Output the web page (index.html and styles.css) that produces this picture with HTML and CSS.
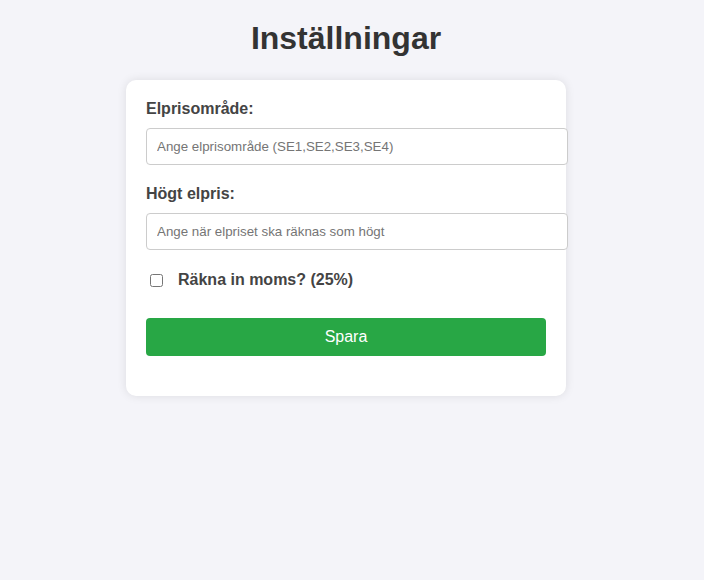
FILE: index.html
```html
<!DOCTYPE html>
<html lang="sv">
<head>
<meta charset="utf-8">
<title>Inställningar</title>
<link rel="stylesheet" href="styles.css">
</head>
<body>
<div class="page">
  <h1 class="title">Inställningar</h1>
  <form class="card">
    <label class="field-label" for="area">Elprisområde:</label>
    <input class="text-input" id="area" type="text" placeholder="Ange elprisområde (SE1,SE2,SE3,SE4)">
    <label class="field-label" for="high">Högt elpris:</label>
    <input class="text-input" id="high" type="text" placeholder="Ange när elpriset ska räknas som högt">
    <div class="check-row">
      <input class="check" id="vat" type="checkbox">
      <label class="check-label" for="vat">Räkna in moms? (25%)</label>
    </div>
    <button class="save" type="button">Spara</button>
  </form>
</div>
</body>
</html>
```
FILE: styles.css
```css
html, body {
  margin: 0;
  padding: 0;
  background: #f4f4f9;
  font-family: "Liberation Sans", Arial, sans-serif;
}
.page {
  display: flex;
  flex-direction: column;
  align-items: center;
  padding: 20px 12px 20px 0;
}
.title {
  margin: 0 0 23px;
  font-size: 32px;
  line-height: 37px;
  font-weight: bold;
  color: #333;
}
.card {
  width: 400px;
  padding: 20px 20px 40px;
  background: #fff;
  border-radius: 10px;
  box-shadow: 0 0 10px rgba(0, 0, 0, 0.1);
  display: flex;
  flex-direction: column;
  align-items: flex-start;
}
.field-label {
  display: block;
  font-size: 16px;
  line-height: 18px;
  font-weight: bold;
  color: #444;
  margin-bottom: 10px;
}
.text-input {
  box-sizing: content-box;
  width: 400px;
  margin: 0 0 20px;
  padding: 10px;
  font-family: "Liberation Sans", Arial, sans-serif;
  font-size: 13.333px;
  line-height: 15px;
  border: 1px solid #ccc;
  border-radius: 4px;
  color: #333;
  outline: none;
}
.text-input::placeholder {
  color: #757575;
}
.check-row {
  display: flex;
  align-items: center;
  height: 20px;
  margin-bottom: 28px;
}
.check {
  width: 13px;
  height: 13px;
  margin: 0 0 0 4px;
}
.check-label {
  margin-left: 15px;
  font-size: 16px;
  font-weight: bold;
  color: #444;
}
.save {
  width: 400px;
  height: 38px;
  border: none;
  border-radius: 4px;
  background: #28a745;
  color: #fff;
  font-family: "Liberation Sans", Arial, sans-serif;
  font-size: 16px;
  cursor: pointer;
}
```
